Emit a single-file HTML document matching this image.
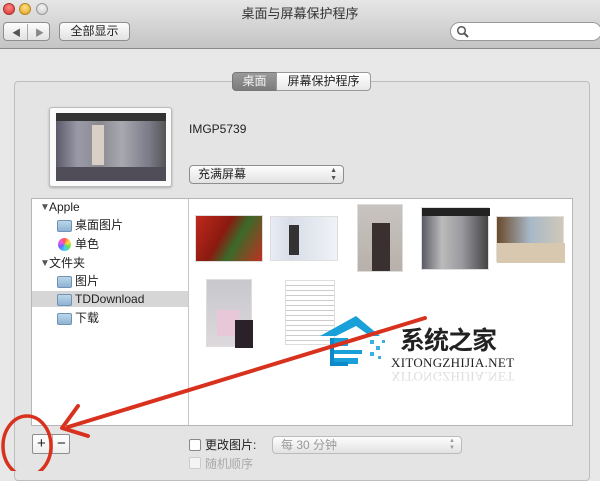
<!DOCTYPE html>
<html><head><meta charset="utf-8"><style>
*{margin:0;padding:0;box-sizing:border-box}
body{width:600px;height:471px;overflow:hidden;background:#e8e8e8;font-family:"Liberation Sans","Noto Sans CJK SC",sans-serif;font-size:12px;color:#222;position:relative}
.a{position:absolute}
.btn{position:absolute;border:1px solid #8e8e8e;border-radius:4px;background:linear-gradient(#fdfdfd,#e2e2e2);text-align:center}
.row{position:absolute;left:0;width:156px;height:17px;line-height:17px;font-size:12px}
.fold{position:absolute;left:25px;top:3px;width:15px;height:12px;background:linear-gradient(#bcd6ea,#8fb3d2);border:1px solid #6f93b4;border-radius:2px}
.lbl{position:absolute;left:43px}
.tri{position:absolute;left:8px;top:0;font-size:10px;color:#555}
.th{position:absolute;border:1px solid #ddd}
</style></head><body>
<!-- titlebar -->
<div class="a" style="left:0;top:0;width:600px;height:49px;background:linear-gradient(#e6e6e6,#c4c4c4);border-bottom:1px solid #8a8a8a"></div>
<div class="a" style="left:3px;top:3px;width:12px;height:12px;border-radius:50%;background:radial-gradient(circle at 50% 35%,#f88,#d6312a);border:1px solid #a33"></div>
<div class="a" style="left:19px;top:3px;width:12px;height:12px;border-radius:50%;background:radial-gradient(circle at 50% 35%,#ffe08a,#e0a21a);border:1px solid #b8861c"></div>
<div class="a" style="left:36px;top:3px;width:12px;height:12px;border-radius:50%;background:radial-gradient(circle at 50% 35%,#f4f4f4,#c8c8c8);border:1px solid #999"></div>
<div class="a" style="left:0;top:3px;width:600px;text-align:center;font-size:13px;color:#333">桌面与屏幕保护程序</div>
<div class="btn" style="left:3px;top:22px;width:47px;height:19px"><span class="a" style="left:8px;top:3px;font-size:9px;color:#555">◀</span><span class="a" style="left:23px;top:1px;width:1px;height:16px;background:#aaa"></span><span class="a" style="left:31px;top:3px;font-size:9px;color:#888">▶</span></div>
<div class="btn" style="left:59px;top:22px;width:71px;height:19px;line-height:17px;font-size:12px">全部显示</div>
<div class="a" style="left:450px;top:22px;width:152px;height:19px;border:1px solid #999;border-radius:10px;background:#fff"></div>
<svg class="a" style="left:456px;top:25px" width="14" height="14"><circle cx="5.5" cy="5.5" r="3.8" fill="none" stroke="#555" stroke-width="1.5"/><line x1="8.3" y1="8.3" x2="12" y2="12" stroke="#555" stroke-width="2"/></svg>
<!-- group box -->
<div class="a" style="left:14px;top:81px;width:576px;height:400px;border:1px solid #bdbdbd;border-radius:4px;background:#e4e4e4"></div>
<div class="a" style="left:232px;top:72px;width:45px;height:19px;border:1px solid #777;border-radius:4px 0 0 4px;background:linear-gradient(#9a9a9a,#7c7c7c);color:#f2f2f2;text-align:center;line-height:17px">桌面</div>
<div class="a" style="left:276px;top:72px;width:95px;height:19px;border:1px solid #999;border-radius:0 4px 4px 0;background:linear-gradient(#fff,#e8e8e8);text-align:center;line-height:17px">屏幕保护程序</div>
<!-- thumbnail -->
<div class="a" style="left:49px;top:107px;width:123px;height:80px;border:1px solid #bbb;border-radius:3px;background:#fafafa;box-shadow:0 1px 2px #aaa"></div>
<div class="a" style="left:56px;top:113px;width:110px;height:68px;background:linear-gradient(90deg,#5a5a6a,#9a9aa8 20%,#8a8a90 40%,#a8a8b0 60%,#7a7a88 85%,#555 100%)"></div>
<div class="a" style="left:56px;top:113px;width:110px;height:8px;background:#333"></div>
<div class="a" style="left:92px;top:125px;width:12px;height:40px;background:#d9cfc6"></div>
<div class="a" style="left:56px;top:167px;width:110px;height:14px;background:#504c58"></div>
<div class="a" style="left:189px;top:122px;font-size:12px">IMGP5739</div>
<div class="btn" style="left:189px;top:165px;width:155px;height:19px;line-height:17px;text-align:left;padding-left:8px;border-radius:4px">充满屏幕<span class="a" style="right:6px;top:1px;font-size:7px;line-height:8px;color:#555">▲<br>▼</span></div>
<!-- list -->
<div class="a" style="left:31px;top:198px;width:542px;height:228px;border:1px solid #b5b5b5;background:#fff"></div>
<div class="a" style="left:188px;top:199px;width:1px;height:226px;background:#c8c8c8"></div>
<div class="a" style="left:32px;top:199px">
<div class="row" style="top:0"><span class="tri">▼</span><span class="a" style="left:17px">Apple</span></div>
<div class="row" style="top:18px"><span class="fold"></span><span class="lbl">桌面图片</span></div>
<div class="row" style="top:37px"><span class="a" style="left:26px;top:2px;width:13px;height:13px;border-radius:50%;background:conic-gradient(#f55,#fd4,#6d5,#4cf,#66f,#e5e,#f55)"></span><span class="lbl">单色</span></div>
<div class="row" style="top:56px"><span class="tri">▼</span><span class="a" style="left:17px">文件夹</span></div>
<div class="row" style="top:74px"><span class="fold"></span><span class="lbl">图片</span></div>
<div class="row" style="top:92px;background:#d6d6d6;height:16px"><span class="fold"></span><span class="lbl">TDDownload</span></div>
<div class="row" style="top:111px"><span class="fold"></span><span class="lbl">下载</span></div>
</div>
<!-- thumbs -->
<div class="th" style="left:195px;top:215px;width:68px;height:47px;background:linear-gradient(120deg,#c0281c,#8a1a10 40%,#3a6a2a 60%,#c03020)"></div>
<div class="th" style="left:270px;top:216px;width:68px;height:45px;background:linear-gradient(90deg,#e8ecf4,#d8dde8 30%,#f0f2f6)"><div class="a" style="left:18px;top:8px;width:10px;height:30px;background:#333"></div></div>
<div class="th" style="left:357px;top:204px;width:46px;height:68px;background:linear-gradient(#c8c4c0,#b8b0aa)"><div class="a" style="left:14px;top:18px;width:18px;height:48px;background:#3a3030"></div></div>
<div class="th" style="left:421px;top:207px;width:68px;height:63px;background:linear-gradient(90deg,#5a5a66,#bbb 30%,#9a9aa0 60%,#444)"><div class="a" style="left:0;top:0;width:68px;height:8px;background:#222"></div></div>
<div class="th" style="left:496px;top:216px;width:68px;height:46px;background:linear-gradient(90deg,#6a4a2a,#a8b8c8 50%,#d0c8b8)"><div class="a" style="left:0;top:26px;width:68px;height:20px;background:#d8c8b0"></div></div>
<div class="th" style="left:206px;top:279px;width:46px;height:68px;background:linear-gradient(#c8c8cc,#dcd8dc)"><div class="a" style="left:10px;top:30px;width:22px;height:26px;background:#e8c8d8"></div><div class="a" style="left:28px;top:40px;width:18px;height:28px;background:#2a2228"></div></div>
<div class="th" style="left:285px;top:280px;width:50px;height:65px;background:repeating-linear-gradient(#fff 0 4px,#ccc 4px 5px)"></div>
<!-- watermark -->
<svg class="a" style="left:318px;top:314px" width="82" height="55"><path d="M2 22 L38 2 L62 22 L52 22 L38 12 L18 22Z" fill="#1aa0d8"/><path d="M16 24 H30 V32 H16Z M16 36 H44 V40 H16Z M16 44 H40 V50 H16Z" fill="#1aa0d8"/><path d="M12 24 V52 H30 V48 H16 V24Z" fill="#0a8ac8"/><rect x="52" y="26" width="4" height="4" fill="#3ab0e0"/><rect x="58" y="32" width="4" height="4" fill="#3ab0e0"/><rect x="64" y="26" width="3" height="3" fill="#3ab0e0"/><rect x="52" y="38" width="4" height="4" fill="#3ab0e0"/><rect x="60" y="42" width="3" height="3" fill="#3ab0e0"/></svg>
<div class="a" style="left:400px;top:327px;font-size:25px;font-weight:bold;color:#222;letter-spacing:-1px;line-height:28px">系统之家</div>
<div class="a" style="left:391px;top:355px;font-family:'Liberation Serif',serif;font-size:13px;color:#222;letter-spacing:0.3px">XITONGZHIJIA.NET</div>
<div class="a" style="left:391px;top:368px;font-family:'Liberation Serif',serif;font-size:13px;color:#ddd;transform:scaleY(-1);letter-spacing:0.3px">XITONGZHIJIA.NET</div>
<!-- bottom controls -->
<div class="btn" style="left:32px;top:434px;width:38px;height:20px;border-radius:2px;background:linear-gradient(#fff,#eee)"><span class="a" style="left:4px;top:0;font-size:15px;line-height:18px">+</span><span class="a" style="left:19px;top:0;width:1px;height:18px;background:#bbb"></span><span class="a" style="left:24px;top:0;font-size:15px;line-height:18px">−</span></div>
<div class="a" style="left:189px;top:439px;width:12px;height:12px;border:1px solid #888;border-radius:2px;background:#fff"></div>
<div class="a" style="left:205px;top:436px;font-size:12px">更改图片:</div>
<div class="btn" style="left:272px;top:436px;width:190px;height:18px;line-height:16px;text-align:left;padding-left:8px;color:#999;border-color:#bbb">每 30 分钟<span class="a" style="right:6px;top:1px;font-size:6px;line-height:7px;color:#999">▲<br>▼</span></div>
<div class="a" style="left:189px;top:457px;width:12px;height:12px;border:1px solid #ccc;border-radius:2px;background:#f4f4f4"></div>
<div class="a" style="left:205px;top:455px;font-size:12px;color:#aaa">随机顺序</div>
<!-- red annotations -->
<svg class="a" style="left:0;top:0" width="600" height="471">
<line x1="425" y1="318" x2="68" y2="427" stroke="#d8321e" stroke-width="4" stroke-linecap="round"/>
<path d="M78 406 L62 428 L88 436" fill="none" stroke="#d8321e" stroke-width="4" stroke-linecap="round" stroke-linejoin="round"/>
<ellipse cx="27" cy="446" rx="24" ry="30" fill="none" stroke="#d8321e" stroke-width="3.5"/>
</svg>
</body></html>
